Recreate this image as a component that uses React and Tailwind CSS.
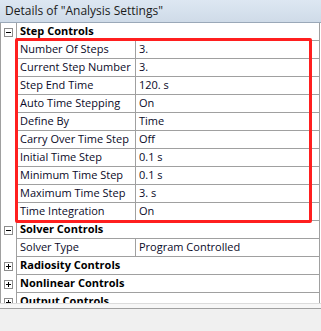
import React from 'react';

const font = { fontFamily: '"Open Sans", "Noto Sans", sans-serif' };

const rows = [
  { type: 'group', label: 'Step Controls', open: true },
  { label: 'Number Of Steps', value: '3.' },
  { label: 'Current Step Number', value: '3.' },
  { label: 'Step End Time', value: '120. s' },
  { label: 'Auto Time Stepping', value: 'On' },
  { label: 'Define By', value: 'Time' },
  { label: 'Carry Over Time Step', value: 'Off' },
  { label: 'Initial Time Step', value: '0.1 s' },
  { label: 'Minimum Time Step', value: '0.1 s' },
  { label: 'Maximum Time Step', value: '3. s' },
  { label: 'Time Integration', value: 'On' },
  { type: 'group', label: 'Solver Controls', open: true },
  { label: 'Solver Type', value: 'Program Controlled' },
  { type: 'group', label: 'Radiosity Controls', open: false },
  { type: 'group', label: 'Nonlinear Controls', open: false },
  { type: 'group', label: 'Output Controls', open: false },
];

function ToggleBox({ open }) {
  return (
    <div className="w-[9px] h-[9px] border border-[#8c8c8c] bg-white relative">
      <div className="absolute left-[1px] right-[1px] top-[3px] h-px bg-black" />
      {!open && <div className="absolute top-[1px] bottom-[1px] left-[3px] w-px bg-black" />}
    </div>
  );
}

function Row({ row }) {
  if (row.type === 'group') {
    return (
      <div className="flex h-[18px]">
        <div className="w-[16px] shrink-0 flex items-center justify-center border-r border-[#a0a0a0] pr-[1px]">
          <ToggleBox open={row.open} />
        </div>
        <div className="flex-1 border-b border-[#a0a0a0] flex items-center pl-[3px] font-bold text-[11px] text-black whitespace-nowrap">
          {row.label}
        </div>
      </div>
    );
  }
  return (
    <div className="flex h-[18px]">
      <div className="w-[16px] shrink-0 border-r border-[#a0a0a0]" />
      <div className="w-[119px] shrink-0 border-b border-r border-[#a0a0a0] flex items-center pl-[3px] text-[11px] text-[#0a0a28] whitespace-nowrap overflow-hidden">
        {row.label}
      </div>
      <div className="flex-1 border-b border-[#a0a0a0] flex items-center pl-[3px] text-[11px] text-[#0a0a28] whitespace-nowrap">
        {row.value}
      </div>
    </div>
  );
}

export default function App() {
  return (
    <div className="w-[321px] h-[331px] bg-white relative overflow-hidden" style={font}>
      {/* title bar */}
      <div className="h-[23px] bg-gradient-to-b from-[#dde7f2] to-[#cfdbe8] border-b border-[#9aa8b8] flex items-center pl-[5px] text-[12px] text-[#1b1b1b] whitespace-nowrap">
        Details of "Analysis Settings"
      </div>

      {/* property grid, last group is cut by the panel edge */}
      <div className="h-[280px] overflow-hidden relative">
        <div className="w-[320px] border-l border-r border-[#a0a0a0]">
          {rows.map((r, i) => (
            <Row key={i} row={r} />
          ))}
        </div>

        {/* red highlight annotation */}
        <div className="absolute left-[15px] top-[15px] w-[297px] h-[185px] border-[3px] border-[#ff1f1f] rounded-[2px]" />
      </div>

      {/* bottom panel */}
      <div className="h-[5px] bg-[#f7f7f7] border-t border-[#dcdcdc]" />
      <div className="h-[23px] bg-[#f0f0f0] border-t border-[#a0a0a0]" />
    </div>
  );
}
